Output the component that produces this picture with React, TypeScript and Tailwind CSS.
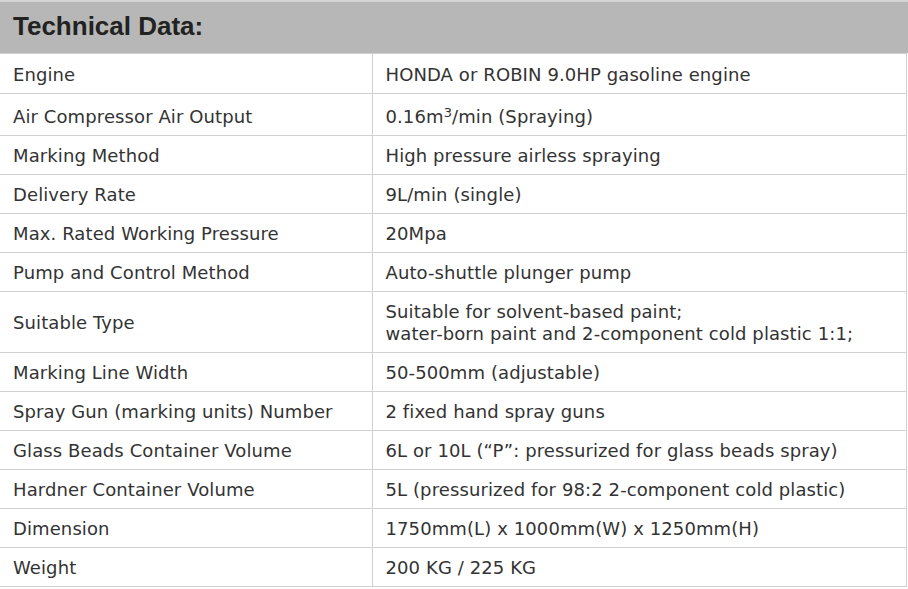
export default function App() {
    const rows: { label: string; value: React.ReactNode; pad?: string }[] = [
        { label: 'Engine', value: 'HONDA or ROBIN 9.0HP gasoline engine', pad: 'pt-[10px] pb-[7px]' },
        {
            label: 'Air Compressor Air Output',
            pad: 'pt-[12px] pb-[7px]',
            value: (
                <>
                    0.16m<sup className="text-[13px]">3</sup>/min (Spraying)
                </>
            ),
        },
        { label: 'Marking Method', value: 'High pressure airless spraying' },
        { label: 'Delivery Rate', value: '9L/min (single)' },
        { label: 'Max. Rated Working Pressure', value: '20Mpa' },
        { label: 'Pump and Control Method', value: 'Auto-shuttle plunger pump' },
        {
            label: 'Suitable Type',
            value: (
                <>
                    Suitable for solvent-based paint;
                    <br />
                    water-born paint and 2-component cold plastic 1:1;
                </>
            ),
        },
        { label: 'Marking Line Width', value: '50-500mm (adjustable)' },
        { label: 'Spray Gun (marking units) Number', value: '2 fixed hand spray guns' },
        { label: 'Glass Beads Container Volume', value: '6L or 10L (\u201cP\u201d: pressurized for glass beads spray)' },
        { label: 'Hardner Container Volume', value: '5L (pressurized for 98:2 2-component cold plastic)' },
        { label: 'Dimension', value: '1750mm(L) x 1000mm(W) x 1250mm(H)' },
        { label: 'Weight', value: '200 KG / 225 KG' },
    ];

    return (
        <div className="w-[908px] bg-white font-['DejaVu_Sans',Verdana,sans-serif] text-[#333]">
            {/* header bar */}
            <div className="h-[53px] bg-[#b7b7b7] border-t-2 border-[#d4d4d4] flex items-center pl-[13px]">
                <h2 className="font-['Liberation_Sans',Arial,sans-serif] font-bold text-[26px] text-[#222] -mt-[2px]">
                    Technical Data:
                </h2>
            </div>

            <table className="w-[907px] border-collapse border-t border-[#d0d0d0] text-[18px] leading-[22px] tracking-[0.1px]">
                <tbody>
                    {rows.map((row) => {
                        const pad = row.pad ?? 'pt-[9px] pb-[7px]';
                        return (
                            <tr key={row.label} className="border-b border-[#d0d0d0]">
                                <td className={`w-[372px] border-r border-[#d0d0d0] pl-[13px] align-middle ${pad}`}>
                                    {row.label}
                                </td>
                                <td className={`border-r border-[#d0d0d0] pl-[13px] align-middle ${pad}`}>
                                    {row.value}
                                </td>
                            </tr>
                        );
                    })}
                </tbody>
            </table>
        </div>
    );
}
